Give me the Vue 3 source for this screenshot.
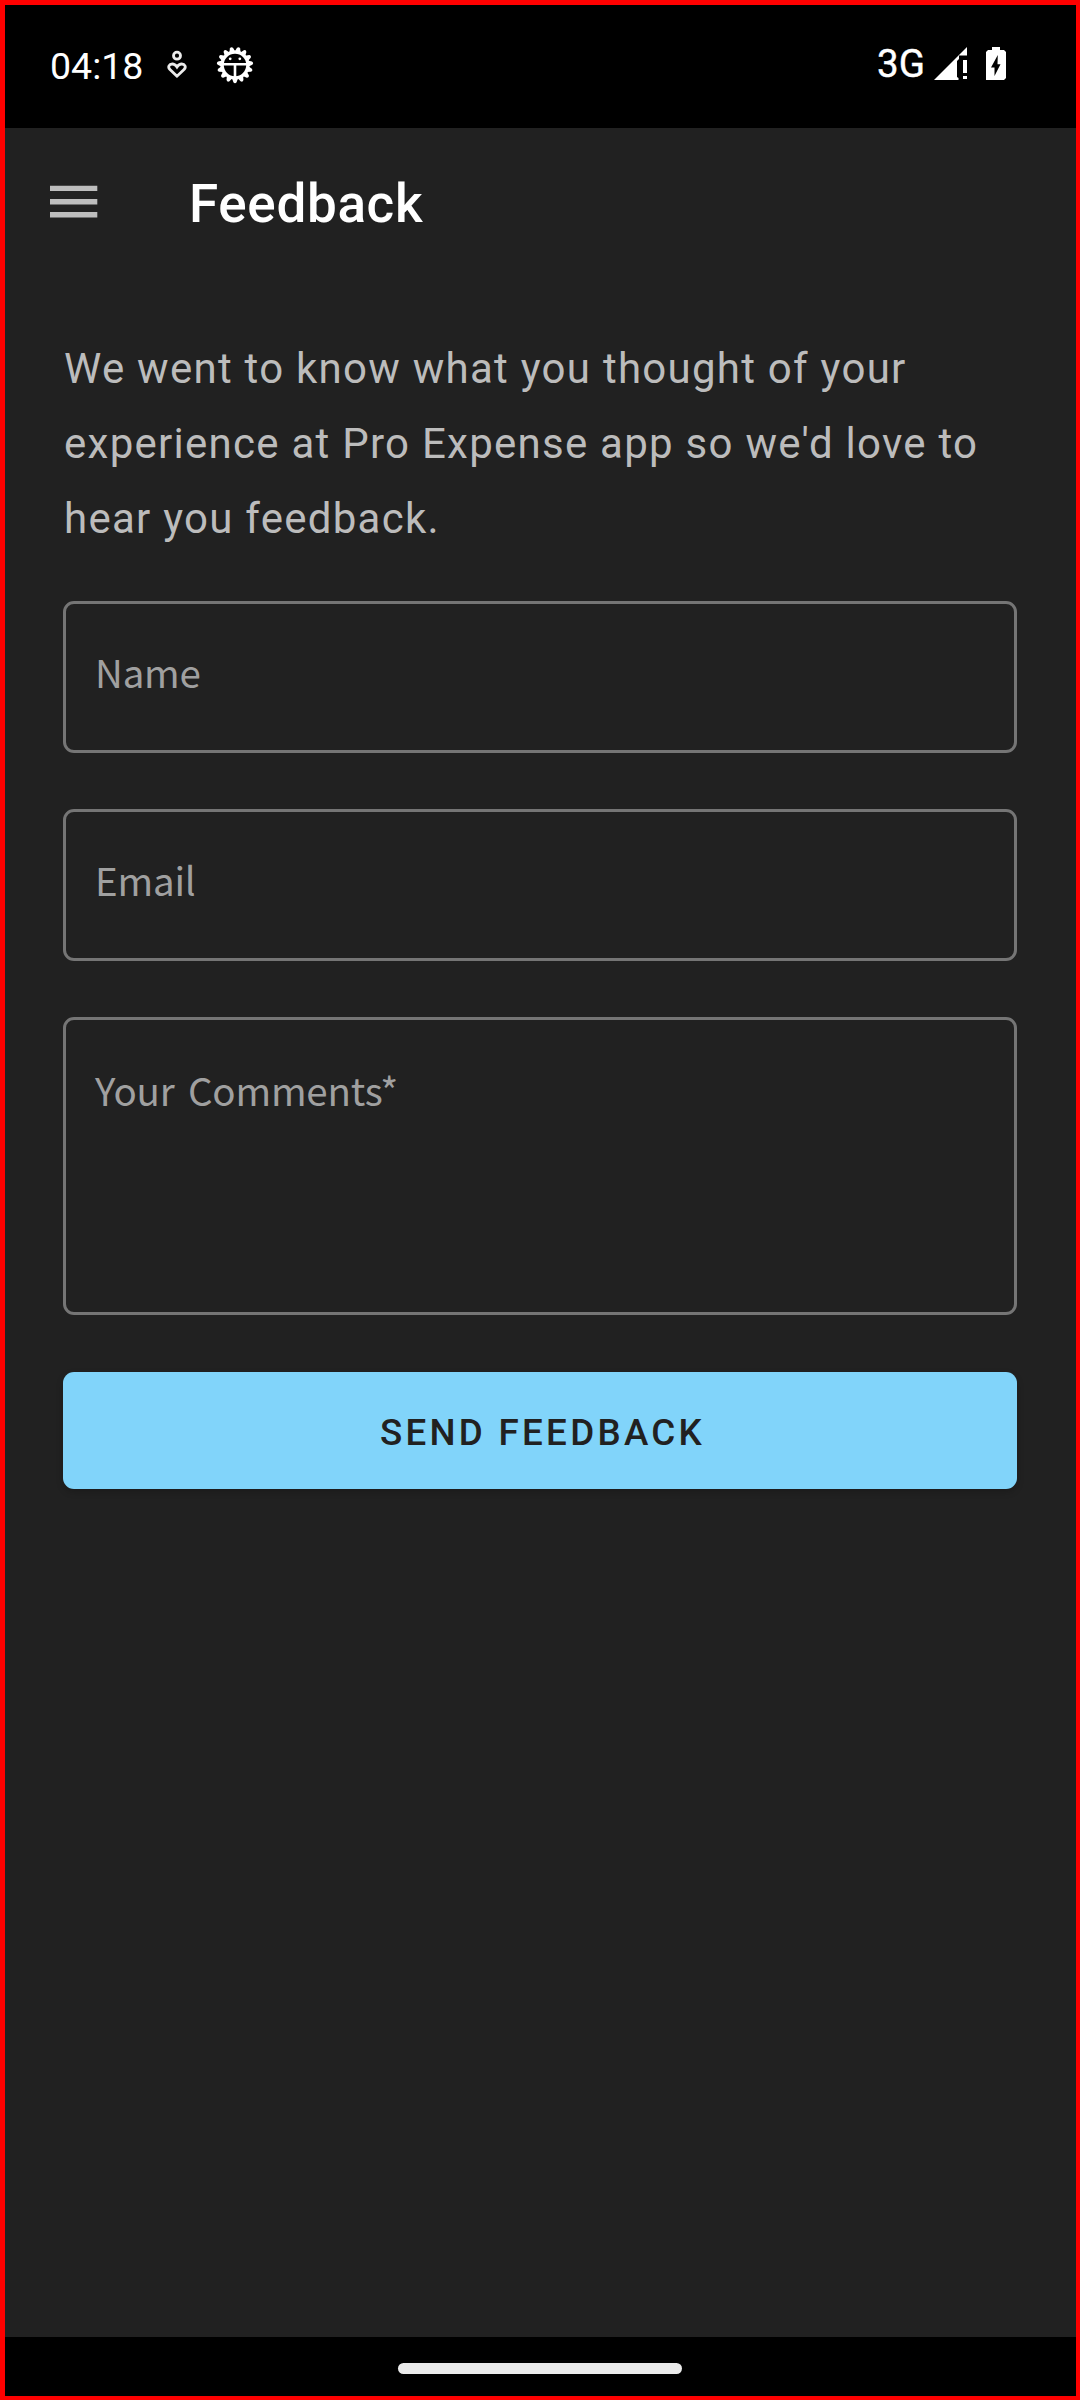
<script setup>
const gearTeeth = Array.from({ length: 15 }, (_, i) => 12 + i * 24)
</script>

<template>
  <div class="screen">
    <header class="status">
      <span class="time">04:18</span>
      <svg class="heart" width="22" height="30" viewBox="0 0 22 30" fill="none" stroke="#ececec" stroke-width="2.8">
        <circle cx="11" cy="5.7" r="3.5" />
        <path d="M11 26.2 L4 19.6 C1.4 16.8 3.2 14 6.3 14 C8.4 14 9.8 15.2 11 17 C12.2 15.2 13.6 14 15.7 14 C18.8 14 20.6 16.8 18 19.6 Z" />
      </svg>
      <svg class="gear" width="38" height="38" viewBox="-19 -19 38 38">
        <path v-for="a in gearTeeth" :key="a" d="M-3.4 -12 L-1.6 -17.2 Q0 -19.2 1.6 -17.2 L3.4 -12 Z" fill="#fff" :transform="`rotate(${a})`" />
        <circle r="12.9" fill="none" stroke="#fff" stroke-width="3.4" />
        <path d="M-13 -0.8 H13 M0 0 V13" fill="none" stroke="#fff" stroke-width="2.6" />
        <circle cx="-4.8" cy="-6.2" r="1.4" fill="#fff" />
        <circle cx="4.8" cy="-6.2" r="1.4" fill="#fff" />
      </svg>
      <span class="network">3G</span>
      <svg class="signal" width="33" height="33" viewBox="0 0 33 33" fill="#fff">
        <path d="M0 33 L33 0 V8.5 H25 V12 L23 14 V30 L24.5 31 V33 Z" />
        <path d="M29 13 H33 V26 H29 Z M29 29 H33 V32 H29 Z" />
      </svg>
      <svg class="battery" width="20" height="33" viewBox="0 0 20 33">
        <path fill="#fff" fill-rule="evenodd" d="M6 0 H14 V3 H18 L20 5 V31 L18 33 H0 V5 L2 3 H6 Z M11.8 8 L5 20.4 H8.5 V29 L14.5 17.2 H11.5 Z" />
      </svg>
    </header>

    <div class="toolbar">
      <svg class="menu" width="48" height="34" viewBox="0 0 48 34" fill="#bdbdbd">
        <path d="M0 .7 H47.3 V6 H0 Z M0 14 H47.3 V19.4 H0 Z M0 27 H47.3 V32.5 H0 Z" />
      </svg>
      <h1 class="title">Feedback</h1>
    </div>

    <main class="content">
      <p class="intro">We went to know what you thought of your<br>experience at Pro Expense app so we'd love to<br>hear you feedback.</p>
      <div class="field"><span>Name</span></div>
      <div class="field"><span>Email</span></div>
      <div class="field comments"><span>Your Comments*</span></div>
      <button class="send">SEND FEEDBACK</button>
    </main>

    <footer class="nav"><div class="handle"></div></footer>
  </div>
</template>

<style>
body {
  margin: 0;
  background: #212121;
}
</style>

<style scoped>
.screen {
  box-sizing: border-box;
  width: 1080px;
  height: 2400px;
  border: solid #f00;
  border-width: 5px 4px 4px 5px;
  background: #212121;
  display: flex;
  flex-direction: column;
  font-family: Roboto, "Liberation Sans", sans-serif;
  overflow: hidden;
}
.status {
  height: 123px;
  flex: none;
  background: #000;
  color: #fff;
  display: flex;
  align-items: flex-start;
}
.time {
  margin: 39px 0 0 45px;
  width: 94px;
  font-size: 37.5px;
  line-height: 44px;
}
.heart {
  margin: 45px 0 0 22px;
}
.gear {
  margin: 41px 0 0 28px;
}
.network {
  margin: 37px 0 0 623px;
  width: 51px;
  font-size: 38.5px;
  line-height: 44px;
  -webkit-text-stroke: 0.4px #fff;
}
.signal {
  margin-top: 42px;
  margin-left: 6px;
}
.battery {
  margin-top: 42px;
  margin-left: 19px;
}
.toolbar {
  height: 147px;
  flex: none;
  display: flex;
  align-items: center;
  padding-left: 45px;
}
.menu {
  flex: none;
}
.title {
  margin: 5px 0 0 91px;
  font-size: 53px;
  line-height: 62px;
  font-weight: 500;
  letter-spacing: 0.66px;
  color: #fff;
}
.content {
  flex: 1;
  display: flex;
  flex-direction: column;
  padding: 56px 59px 0 58px;
}
.intro {
  margin: 0 0 45px 1px;
  font-size: 42px;
  line-height: 75px;
  letter-spacing: 1.26px;
  color: #bcbcbc;
  white-space: nowrap;
}
.field {
  box-sizing: border-box;
  flex: none;
  height: 152px;
  margin-bottom: 56px;
  padding: 37px 29px 0;
  border: 3px solid #757575;
  border-radius: 11px;
  font-family: "Noto Sans CJK SC", sans-serif;
  font-size: 38.5px;
  line-height: 60px;
  letter-spacing: -0.2px;
  word-spacing: 5px;
  color: #a0a0a0;
}
.comments {
  height: 298px;
  margin-bottom: 57px;
  padding-top: 39px;
}
.send {
  flex: none;
  height: 117px;
  padding: 3px 0 0 5px;
  border: 0;
  border-radius: 11px;
  background: #81d4fa;
  color: #212121;
  font-family: Roboto, "Liberation Sans", sans-serif;
  font-size: 36.75px;
  font-weight: 500;
  letter-spacing: 3.28px;
  box-shadow: 0 3px 7px rgba(0, 0, 0, 0.2);
}
.nav {
  height: 59px;
  flex: none;
  background: #000;
  display: flex;
  align-items: flex-start;
}
.handle {
  width: 284px;
  height: 11px;
  margin: 26px 0 0 393px;
  border-radius: 6px;
  background: #ebebeb;
}
</style>
